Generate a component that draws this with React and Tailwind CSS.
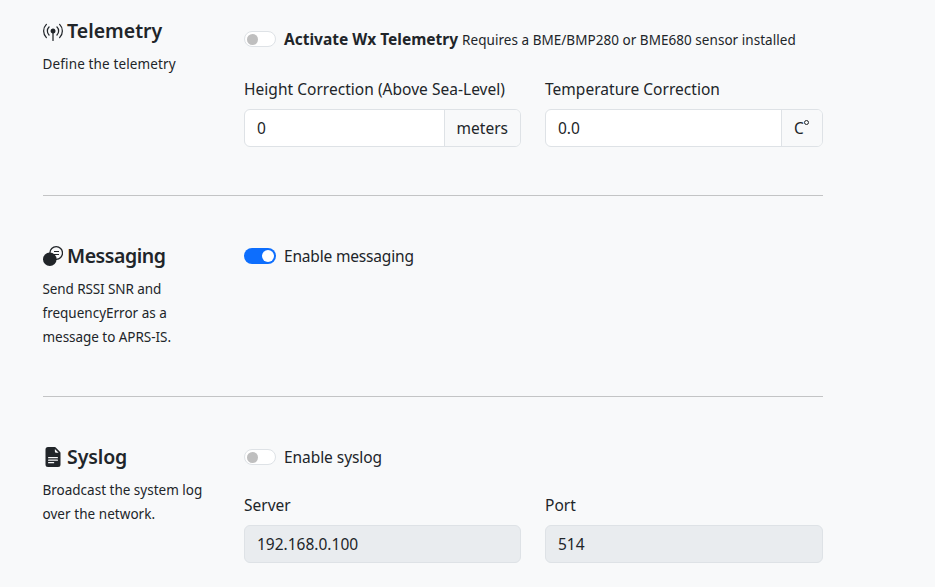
import { BsBroadcastPin, BsFileEarmarkTextFill } from "react-icons/bs";

function MessageIcon() {
  return (
    <svg viewBox="0 0 20 20" className="h-5 w-5" fill="none">
      <circle cx="13.2" cy="7" r="6.3" stroke="#212529" strokeWidth="1.3" fill="#f8f9fa" />
      <path d="M11 5.5h5M11 8.5h5" stroke="#212529" strokeWidth="1" />
      <circle cx="6.8" cy="13.2" r="6.8" fill="#212529" />
    </svg>
  );
}

function Section({ icon, title, titleClass, lines, contentClass = "", children }) {
  return (
    <section className="flex">
      <div className="w-[201px] shrink-0">
        <h5 className="mb-2 flex h-6 items-center gap-1 text-[19.5px] font-semibold leading-6">
          <span className="shrink-0">{icon}</span>
          <span className={titleClass}>{title}</span>
        </h5>
        {lines.map(([text, tracking]) => (
          <div key={text} className={`-ml-[0.5px] h-6 whitespace-nowrap pt-px text-[13.5px] leading-6 ${tracking}`}>
            {text}
          </div>
        ))}
      </div>
      <div className={`flex-1 ${contentClass}`}>{children}</div>
    </section>
  );
}

function Switch({ on, children }) {
  return (
    <label className="flex h-6 items-center gap-2">
      {on ? (
        <span className="flex h-4 w-8 items-center justify-end rounded-full bg-[#0d6efd] pr-[2px]">
          <span className="h-3 w-3 rounded-full bg-white" />
        </span>
      ) : (
        <span className="flex h-4 w-8 items-center rounded-full border border-[#dee2e6] bg-white pl-[2px]">
          <span className="h-[11px] w-[11px] rounded-full bg-[#bfbfbf]" />
        </span>
      )}
      {children}
    </label>
  );
}

function Field({ label, labelClass = "", value, unit, disabled }) {
  return (
    <div>
      <div className={`mb-2 h-6 whitespace-nowrap leading-6 ${labelClass}`}>{label}</div>
      <div
        className={`flex h-[38px] overflow-hidden rounded-md border border-[#dee2e6] ${
          disabled ? "bg-[#e9ecef]" : "bg-white"
        }`}
      >
        <div className="flex flex-1 items-center px-3 pt-[2px]">{value}</div>
        {unit && (
          <div className="flex items-center border-l border-[#dee2e6] bg-[#f8f9fa] px-3 pt-[2px]">{unit}</div>
        )}
      </div>
    </div>
  );
}

export default function App() {
  return (
    <main className="h-[587px] w-[935px] overflow-hidden bg-[#f8f9fa] pl-[43px] pt-[19px] font-['Noto_Sans',sans-serif] text-[15.5px] text-[#212529]">
      <div className="w-[780px]">
        <Section
          icon={<BsBroadcastPin className="h-5 w-5" />}
          title="Telemetry"
          titleClass="tracking-normal"
          lines={[["Define the telemetry", "tracking-[0.14px]"]]}
          contentClass="pt-2"
        >
          <Switch>
            <span className="flex items-baseline gap-1 whitespace-nowrap pt-px">
              <span className="font-bold">Activate Wx Telemetry</span>
              <span className="text-[13.5px] tracking-[0.04px]">
                Requires a BME/BMP280 or BME680 sensor installed
              </span>
            </span>
          </Switch>
          <div className="mt-[26px] grid grid-cols-[277px_278px] gap-6">
            <Field
              label="Height Correction (Above Sea-Level)"
              labelClass="tracking-[0.03px]"
              value="0"
              unit="meters"
            />
            <Field
              label="Temperature Correction"
              labelClass="tracking-[0.03px]"
              value="0.0"
              unit={
                <span className="flex w-4 items-center">
                  <span className="tracking-[-0.3px]">C</span>
                  <span className="-mt-[13px] h-[5px] w-[5px] shrink-0 rounded-full border border-[#212529]" />
                </span>
              }
            />
          </div>
        </Section>
        <hr className="my-12 border-[#c3c4c5]" />
        <Section
          icon={<MessageIcon />}
          title="Messaging"
          titleClass="tracking-[-0.45px]"
          lines={[
            ["Send RSSI SNR and", "tracking-[-0.1px]"],
            ["frequencyError as a", "tracking-normal"],
            ["message to APRS-IS.", "tracking-[-0.04px]"],
          ]}
        >
          <Switch on>
            <span className="pt-[2px] tracking-[-0.18px]">Enable messaging</span>
          </Switch>
        </Section>
        <hr className="my-12 border-[#c3c4c5]" />
        <Section
          icon={<BsFileEarmarkTextFill className="h-5 w-5" />}
          title="Syslog"
          titleClass="tracking-[-0.1px]"
          lines={[
            ["Broadcast the system log", "tracking-normal"],
            ["over the network.", "tracking-[0.05px]"],
          ]}
        >
          <Switch>
            <span className="pt-[2px] tracking-[-0.06px]">Enable syslog</span>
          </Switch>
          <div className="mt-6 grid grid-cols-[277px_278px] gap-6">
            <Field label="Server" value="192.168.0.100" disabled />
            <Field label="Port" value="514" disabled />
          </div>
        </Section>
      </div>
    </main>
  );
}
